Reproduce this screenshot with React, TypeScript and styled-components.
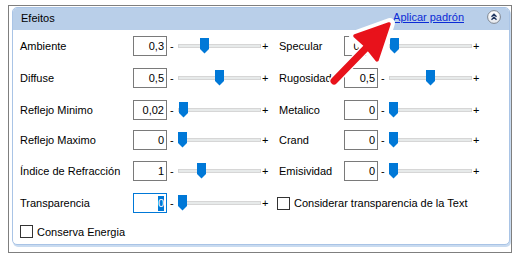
import React from "react";
import styled, { createGlobalStyle } from "styled-components";

const Global = createGlobalStyle`
  html, body { margin: 0; padding: 0; background: #fff; }
  body { font-family: "Liberation Sans", Arial, sans-serif; font-size: 11px; color: #000; }
`;

const Page = styled.div`
  position: relative;
  width: 528px;
  height: 261px;
  padding: 5px 0 0 8px;
  box-sizing: border-box;
`;

const Frame = styled.div`
  width: 504px;
  height: 248px;
  box-sizing: border-box;
  border: 1px solid #7f7f7f;
  padding: 1px 1px 0 3px;
`;

const Panel = styled.div`
  height: 238px;
  box-sizing: border-box;
  border: 1px solid #a9c4e6;
  border-radius: 5px;
  box-shadow: 1px 2px 0 #c9dbf0;
  background: #fff;
`;

const Header = styled.div`
  display: flex;
  align-items: flex-start;
  height: 22px;
  background: #b9cfe9;
  border-radius: 4px 4px 0 0;
`;

const Title = styled.div`
  flex: 1;
  line-height: 21px;
  padding-left: 8px;
`;

const Link = styled.a`
  margin-top: 2px;
  line-height: 14px;
  color: #0b2bd6;
  text-decoration: underline;
  cursor: pointer;
`;

const Collapse = styled.button`
  margin: 2px 8px 0 23px;
  width: 14px;
  height: 14px;
  padding: 0;
  border: 0;
  background: none;
  display: block;
`;

const Body = styled.div`
  display: grid;
  grid-template-columns: 113px 34px 11px 83px 18px 65px 34px 11px 83px 1fr;
  grid-template-rows: 32px 32px 30px 31px 32px 32px 20px;
  padding: 6px 0 0 7px;
  align-items: start;
`;

const FieldLabel = styled.div`
  line-height: 20px;
  white-space: nowrap;
`;

const NumBox = styled.div<{ $focused?: boolean }>`
  height: 20px;
  box-sizing: border-box;
  border: 1px solid ${(p) => (p.$focused ? "#0078d7" : "#7a7a7a")};
  text-align: right;
  padding-right: 2px;
  line-height: 18px;
  background: #fff;
`;

const Selected = styled.span`
  background: #0078d7;
  color: #fff;
  padding: 1px 0 2px;
`;

const Dash = styled.div`
  line-height: 20px;
  padding-left: 3px;
`;

const Plus = styled.div`
  line-height: 20px;
  padding-left: 1px;
`;

const Track = styled.div`
  height: 20px;
`;

const TrackLine = styled.div`
  position: relative;
  margin-top: 8px;
  height: 4px;
  box-sizing: border-box;
  background: #e7eaea;
  border: 1px solid #d6d6d6;
`;

const Thumb = styled.svg`
  position: absolute;
  top: -7px;
  display: block;
`;

const CheckRow = styled.label<{ $col: string; $shift?: number; $h: number }>`
  grid-column: ${(p) => p.$col};
  display: flex;
  align-items: center;
  gap: 4px;
  height: ${(p) => p.$h}px;
  margin-left: ${(p) => p.$shift ?? 0}px;
  white-space: nowrap;
`;

const Box = styled.span`
  width: 13px;
  height: 13px;
  box-sizing: border-box;
  border: 1px solid #333;
  background: #fff;
  flex: none;
`;

const Overlay = styled.svg`
  position: absolute;
  left: 0;
  top: 0;
  pointer-events: none;
`;

type FieldProps = {
  label: string;
  value: string;
  frac: number;
  focused?: boolean;
};

const Field = ({ label, value, frac, focused }: FieldProps) => (
  <>
    <FieldLabel>{label}</FieldLabel>
    <NumBox $focused={focused}>{focused ? <Selected>{value}</Selected> : value}</NumBox>
    <Dash>-</Dash>
    <Track>
      <TrackLine>
        <Thumb width="9" height="16" viewBox="0 0 9 16" style={{ left: Math.round(frac * 74) - 1 }}>
          <polygon points="0,0 9,0 9,11 4.5,15.5 0,11" fill="#0078d7" />
        </Thumb>
      </TrackLine>
    </Track>
    <Plus>+</Plus>
  </>
);

const left: FieldProps[] = [
  { label: "Ambiente", value: "0,3", frac: 0.3 },
  { label: "Diffuse", value: "0,5", frac: 0.5 },
  { label: "Reflejo Minimo", value: "0,02", frac: 0.02 },
  { label: "Reflejo Maximo", value: "0", frac: 0 },
  { label: "Índice de Refracción", value: "1", frac: 0.25 },
  { label: "Transparencia", value: "0", frac: 0, focused: true },
];

const right: FieldProps[] = [
  { label: "Specular", value: "0,02", frac: 0.01 },
  { label: "Rugosidad", value: "0,5", frac: 0.5 },
  { label: "Metalico", value: "0", frac: 0 },
  { label: "Crand", value: "0", frac: 0 },
  { label: "Emisividad", value: "0", frac: 0 },
];

export default function App() {
  return (
    <Page>
      <Global />
      <Frame>
        <Panel>
          <Header>
            <Title>Efeitos</Title>
            <Link>Aplicar padrón</Link>
            <Collapse>
              <svg width="14" height="14" viewBox="0 0 14 14">
                <defs>
                  <linearGradient id="cg" x1="0" y1="0" x2="0" y2="1">
                    <stop offset="0" stopColor="#ffffff" />
                    <stop offset="1" stopColor="#e6e9ee" />
                  </linearGradient>
                </defs>
                <circle cx="7" cy="7" r="6.4" fill="url(#cg)" stroke="#7d8590" strokeWidth="1" />
                <path d="M4.5 6.7 L7 4.2 L9.5 6.7 M4.5 9.7 L7 7.2 L9.5 9.7" fill="none" stroke="#1f3660" strokeWidth="1.4" />
              </svg>
            </Collapse>
          </Header>
          <Body>
            {left.map((l, i) => (
              <React.Fragment key={l.label}>
                <Field {...l} />
                {right[i] ? (
                  <Field {...right[i]} />
                ) : (
                  <CheckRow $col="6 / -1" $shift={-2} $h={20}>
                    <Box />
                    Considerar transparencia de la Text
                  </CheckRow>
                )}
              </React.Fragment>
            ))}
            <CheckRow $col="1 / -1" $h={13}>
              <Box />
              Conserva Energia
            </CheckRow>
          </Body>
        </Panel>
      </Frame>
      <Overlay width="528" height="261" viewBox="0 0 528 261">
        <g stroke="#fff" strokeWidth="10" strokeLinecap="round" strokeLinejoin="round" fill="#fff">
          <line x1="334" y1="81" x2="370" y2="44" />
          <polygon points="390,23 354,36 364,46 378,61" />
        </g>
        <g stroke="#e8121b" strokeWidth="7" strokeLinecap="round" strokeLinejoin="round" fill="#e8121b">
          <line x1="334" y1="81" x2="370" y2="44" />
          <polygon points="389,24 355,36 365,45 377,60" strokeWidth="3.5" />
        </g>
      </Overlay>
    </Page>
  );
}
